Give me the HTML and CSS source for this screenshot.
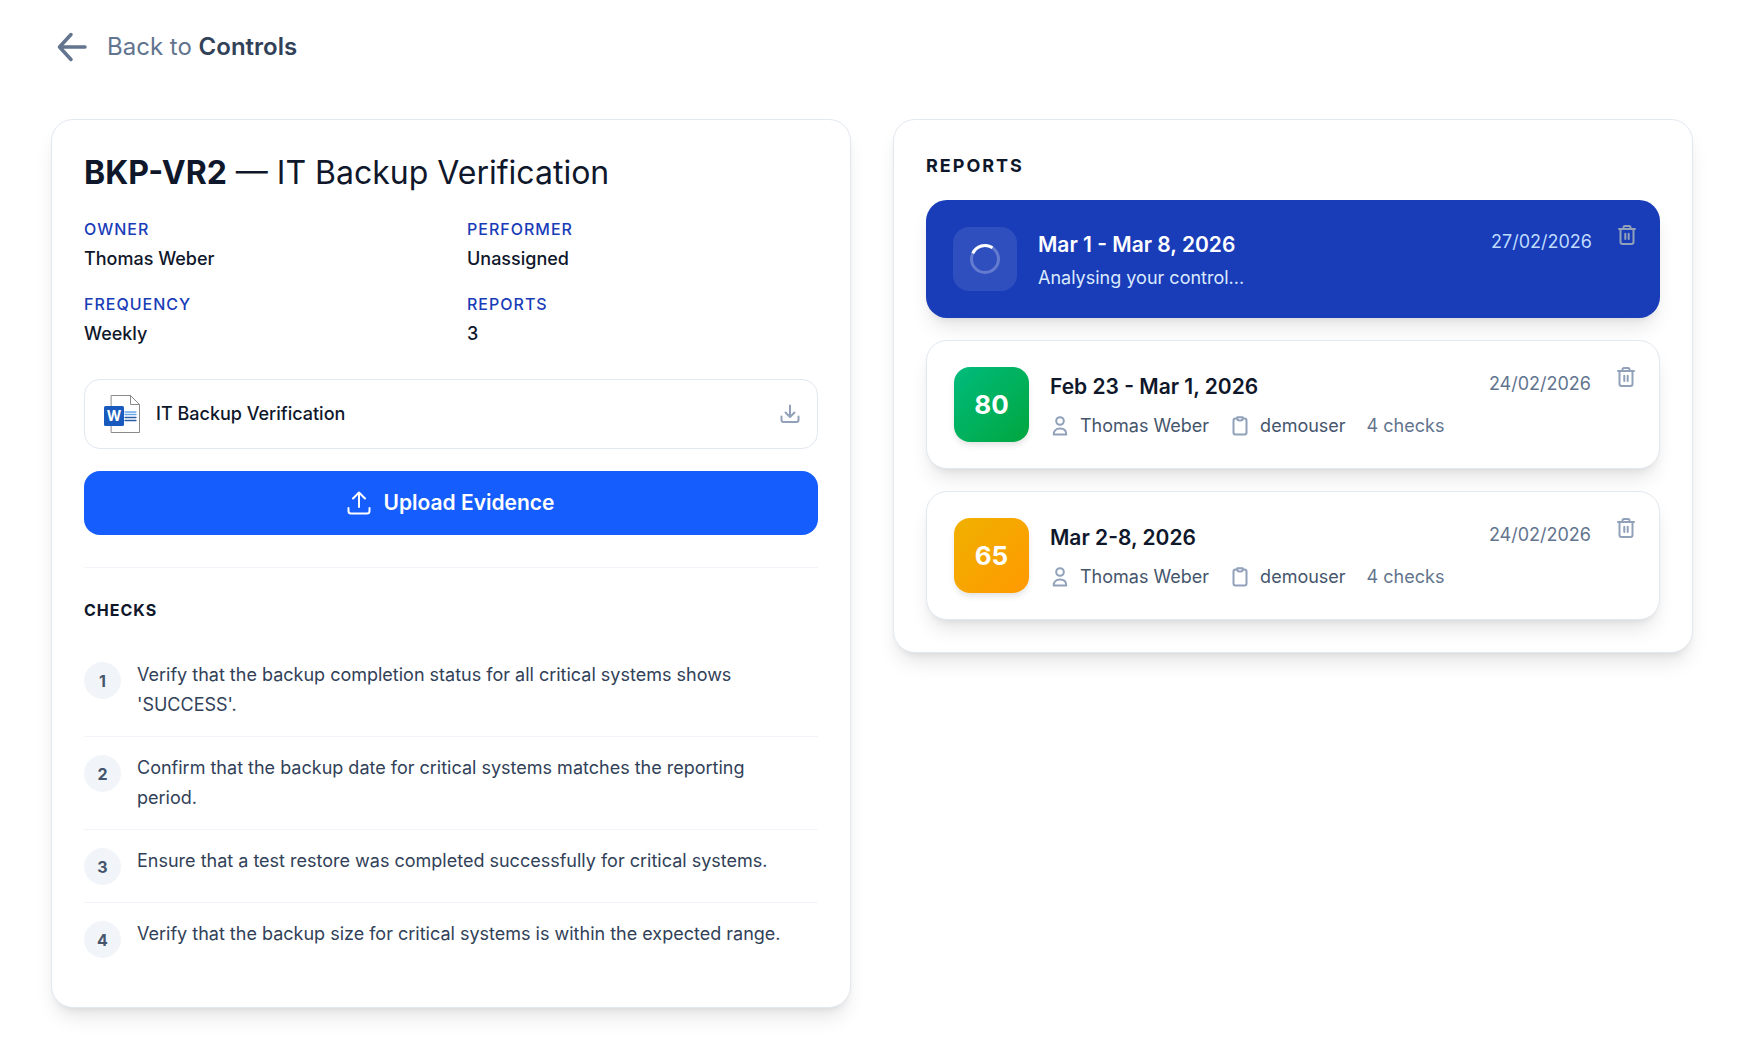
FILE: index.html
```html
<!DOCTYPE html>
<html lang="en">
<head>
<meta charset="utf-8">
<title>BKP-VR2 — IT Backup Verification</title>
<link rel="stylesheet" href="styles.css">
</head>
<body>
<svg class="sprite" aria-hidden="true">
  <symbol id="trash" viewBox="0 0 18 20"><path d="M1 4h16M5.500 4V2.500Q5.500 1 7 1h4q1.500 0 1.500 1.500V4M2.500 4v13q0 2 2 2h9q2 0 2-2V4M7.300 8.800v5.200M10.700 8.800v5.200"/></symbol>
  <symbol id="person" viewBox="0 0 20 20"><circle cx="10" cy="5" r="3.800"/><path d="M3.700 18.500c0-3.700 2.300-6 6.300-6s6.300 2.300 6.300 6z"/></symbol>
  <symbol id="clipboard" viewBox="0 0 20 20"><path d="M7 2.500H5.500q-2 0-2 2v12q0 2 2 2h9q2 0 2-2v-12q0-2-2-2H13"/><path d="M7.300 1.200h5.400v1.300q0 2-2 2H9.300q-2 0-2-2z"/></symbol>
</svg>
<main class="page">
  <nav>
    <a class="back" href="#controls">
      <svg class="back-icon" viewBox="0 0 32 32" aria-hidden="true"><path d="M29 16H4M15 3.500L3.500 16 15 28.500"/></svg>
      <span>Back to <strong>Controls</strong></span>
    </a>
  </nav>
  <div class="columns">
    <section class="card">
      <h1><strong>BKP-VR2</strong> — IT Backup Verification</h1>
      <dl class="facts">
        <div><dt>Owner</dt><dd>Thomas Weber</dd></div>
        <div><dt>Performer</dt><dd>Unassigned</dd></div>
        <div><dt>Frequency</dt><dd>Weekly</dd></div>
        <div><dt>Reports</dt><dd>3</dd></div>
      </dl>
      <a class="file" href="#download">
        <svg class="word-icon" viewBox="0 0 36 38" aria-hidden="true">
          <path d="M7.500.500h19L35.500 9.500v28h-28z" fill="#fff" stroke="#8a8a8a"/>
          <path d="M26.500.500v9h9" fill="none" stroke="#8a8a8a"/>
          <path d="M21 17h11M21 19.500h11" stroke="#6ba6e8" stroke-width="1.300"/>
          <path d="M21 22.500h11M21 25.500h11" stroke="#2b5ca8" stroke-width="1.300"/>
          <rect y="11" width="20" height="20" rx="1.500" fill="#185abd"/>
          <text x="10" y="25.500" text-anchor="middle">W</text>
        </svg>
        <span class="file-name">IT Backup Verification</span>
        <svg class="download-icon" viewBox="0 0 20 20" aria-hidden="true"><path d="M1.500 12.500v3.500q0 2 2 2h13q2 0 2-2v-3.500M10 1.500v11M5.500 8.500L10 13l4.500-4.500"/></svg>
      </a>
      <button class="upload" type="button">
        <svg class="upload-icon" viewBox="0 0 24 24" aria-hidden="true"><path d="M1.500 17v3q0 2.500 2.500 2.500h16q2.500 0 2.500-2.500v-3M12 16V1.500M6 7.500l6-6 6 6"/></svg>
        Upload Evidence
      </button>
      <div class="checks">
        <h2>Checks</h2>
        <ol>
          <li><span class="num">1</span><p>Verify that the backup completion status for all critical systems shows 'SUCCESS'.</p></li>
          <li><span class="num">2</span><p>Confirm that the backup date for critical systems matches the reporting period.</p></li>
          <li><span class="num">3</span><p>Ensure that a test restore was completed successfully for critical systems.</p></li>
          <li><span class="num">4</span><p>Verify that the backup size for critical systems is within the expected range.</p></li>
        </ol>
      </div>
    </section>
    <section class="card reports">
      <h2>Reports</h2>
      <div class="report-list">
        <article class="report running">
          <div class="spinner-box"><svg viewBox="0 0 30 30" aria-hidden="true"><circle class="track" cx="15" cy="15" r="13.500"/><path class="arc" d="M2.800 9.300A13.500 13.500 0 0 1 22.500 3.800"/></svg></div>
          <div class="info"><h3>Mar 1 - Mar 8, 2026</h3><p class="status">Analysing your control...</p></div>
          <time datetime="2026-02-27">27/02/2026</time>
          <button class="delete" type="button" aria-label="Delete report"><svg><use href="#trash"/></svg></button>
        </article>
        <article class="report">
          <div class="score good">80</div>
          <div class="info"><h3>Feb 23 - Mar 1, 2026</h3>
            <p class="meta"><span class="who"><svg><use href="#person"/></svg>Thomas Weber</span><span class="who"><svg><use href="#clipboard"/></svg>demouser</span><span>4 checks</span></p></div>
          <time datetime="2026-02-24">24/02/2026</time>
          <button class="delete" type="button" aria-label="Delete report"><svg><use href="#trash"/></svg></button>
        </article>
        <article class="report">
          <div class="score fair">65</div>
          <div class="info"><h3>Mar 2-8, 2026</h3>
            <p class="meta"><span class="who"><svg><use href="#person"/></svg>Thomas Weber</span><span class="who"><svg><use href="#clipboard"/></svg>demouser</span><span>4 checks</span></p></div>
          <time datetime="2026-02-24">24/02/2026</time>
          <button class="delete" type="button" aria-label="Delete report"><svg><use href="#trash"/></svg></button>
        </article>
      </div>
    </section>
  </div>
</main>
</body>
</html>
```
FILE: styles.css
```css
* { box-sizing: border-box; }
h1, h2, h3, p, dl, dd, ol { margin: 0; padding: 0; }
body {
  margin: 0;
  background: #fff;
  color: #0f172b;
  font: 18px/28px Inter, "Liberation Sans", sans-serif;
}
svg { flex: none; fill: none; stroke: currentColor; stroke-linecap: round; stroke-linejoin: round; }
.sprite { display: none; }
.page { padding: 31px 71px 32px 51px; }

.back {
  display: inline-flex;
  align-items: center;
  gap: 19px;
  padding-left: 5px;
  font-size: 24px;
  line-height: 32px;
  color: #62748e;
  text-decoration: none;
}
.back strong { font-weight: 600; color: #314158; }
.back-icon { width: 32px; height: 32px; stroke-width: 3.5; }
nav { display: flex; margin-bottom: 56px; }

.columns { display: grid; grid-template-columns: 1fr 1fr; gap: 42px; align-items: start; }
.card {
  padding: 32px;
  border: 1px solid #e2e8f0;
  border-radius: 22px;
  background: #fff;
  box-shadow: 0 13px 20px -4px rgb(0 0 0 / 10%), 0 5px 8px -5px rgb(0 0 0 / 10%);
}
h1 { font-size: 32px; line-height: 42px; font-weight: 400; }
h1 strong { font-weight: 700; }
.facts { display: grid; grid-template-columns: 1fr 1fr; gap: 20px 32px; margin-top: 24px; }
dt {
  font-size: 16px;
  line-height: 22px;
  font-weight: 500;
  letter-spacing: 1px;
  text-transform: uppercase;
  color: #193cb8;
}
dd { margin-top: 5px; font-weight: 500; }

.file {
  display: flex;
  align-items: center;
  gap: 16px;
  margin-top: 31px;
  padding: 15px 17px 15px 19px;
  border: 1px solid #e2e8f0;
  border-radius: 16px;
  color: inherit;
  text-decoration: none;
}
.file-name { flex: 1; font-weight: 500; }
.word-icon { width: 36px; height: 38px; stroke: none; }
.word-icon text { font: 700 14px Inter, sans-serif; fill: #fff; stroke: none; }
.download-icon { width: 20px; height: 20px; stroke-width: 2; color: #90a1b9; }
.upload {
  display: flex;
  align-items: center;
  justify-content: center;
  gap: 12px;
  width: 100%;
  height: 64px;
  margin-top: 22px;
  border: 0;
  border-radius: 16px;
  background: #155dfc;
  color: #fff;
  font: 600 21px/32px Inter, sans-serif;
}
.upload-icon { width: 24px; height: 24px; stroke-width: 2; }

.checks { margin-top: 32px; padding-top: 30px; border-top: 1px solid #f1f5f9; }
h2 { font-size: 16px; line-height: 24px; font-weight: 700; letter-spacing: 1px; text-transform: uppercase; }
.checks ol { margin-top: 22px; list-style: none; }
.checks li { display: flex; gap: 16px; padding: 16px 16px 16px 0; color: #314158; }
.checks li { position: relative; }
.checks li + li { border-top: 1px solid #f1f5f9; }
.checks p { line-height: 30px; }
.num {
  display: grid;
  place-items: center;
  flex: none;
  width: 37px;
  height: 37px;
  margin: 2px 0 1px;
  border-radius: 50%;
  background: #f1f5f9;
  color: #45556c;
  font-size: 16px;
  font-weight: 700;
}

.reports h2 { font-size: 18px; line-height: 28px; letter-spacing: 2px; }
.report-list { display: grid; gap: 22px; margin-top: 20px; }
.report {
  display: flex;
  align-items: flex-start;
  gap: 21px;
  padding: 26px 24px 26px 27px;
  border: 1px solid #e2e8f0;
  border-radius: 21px;
  background: #fff;
  box-shadow: 0 13px 20px -4px rgb(0 0 0 / 10%), 0 5px 8px -5px rgb(0 0 0 / 10%);
}
.report.running { padding: 25px 24px 26px 27px; border: 0; background: #193cb8; color: #fff; }
.spinner-box {
  display: grid;
  place-items: center;
  width: 64px;
  height: 64px;
  margin-top: 2px;
  border-radius: 16px;
  background: rgb(255 255 255 / 10%);
}
.spinner-box svg { width: 30px; height: 30px; stroke-width: 3; }
.track { stroke: rgb(255 255 255 / 25%); }
.arc { stroke: #fff; stroke-linecap: butt; }
.info { flex: 1; padding-top: 4px; }
h3 { font-size: 21px; line-height: 32px; font-weight: 600; }
.status { margin-top: 3px; color: #dbeafe; }
.score {
  display: grid;
  place-items: center;
  width: 75px;
  height: 75px;
  border-radius: 16px;
  color: #fff;
  font-size: 26px;
  font-weight: 700;
  box-shadow: 0 4px 6px -1px rgb(0 0 0 / 12%);
}
.good { background: linear-gradient(135deg, #00bc7d, #00a63e); }
.fair { background: linear-gradient(135deg, #f0b100, #ff9900); }
.meta { display: flex; gap: 21px; margin-top: 9px; color: #62748e; }
.who { display: flex; align-items: center; gap: 10px; color: #45556c; }
.who svg { width: 20px; height: 20px; stroke-width: 2; color: #90a1b9; }
time { padding-top: 3px; color: #62748e; }
.running time { color: #bedbff; }
.delete { margin-left: 5px; padding: 0; border: 0; background: none; color: #90a1b9; }
.delete svg { display: block; width: 18px; height: 20px; stroke-width: 2; }
```
